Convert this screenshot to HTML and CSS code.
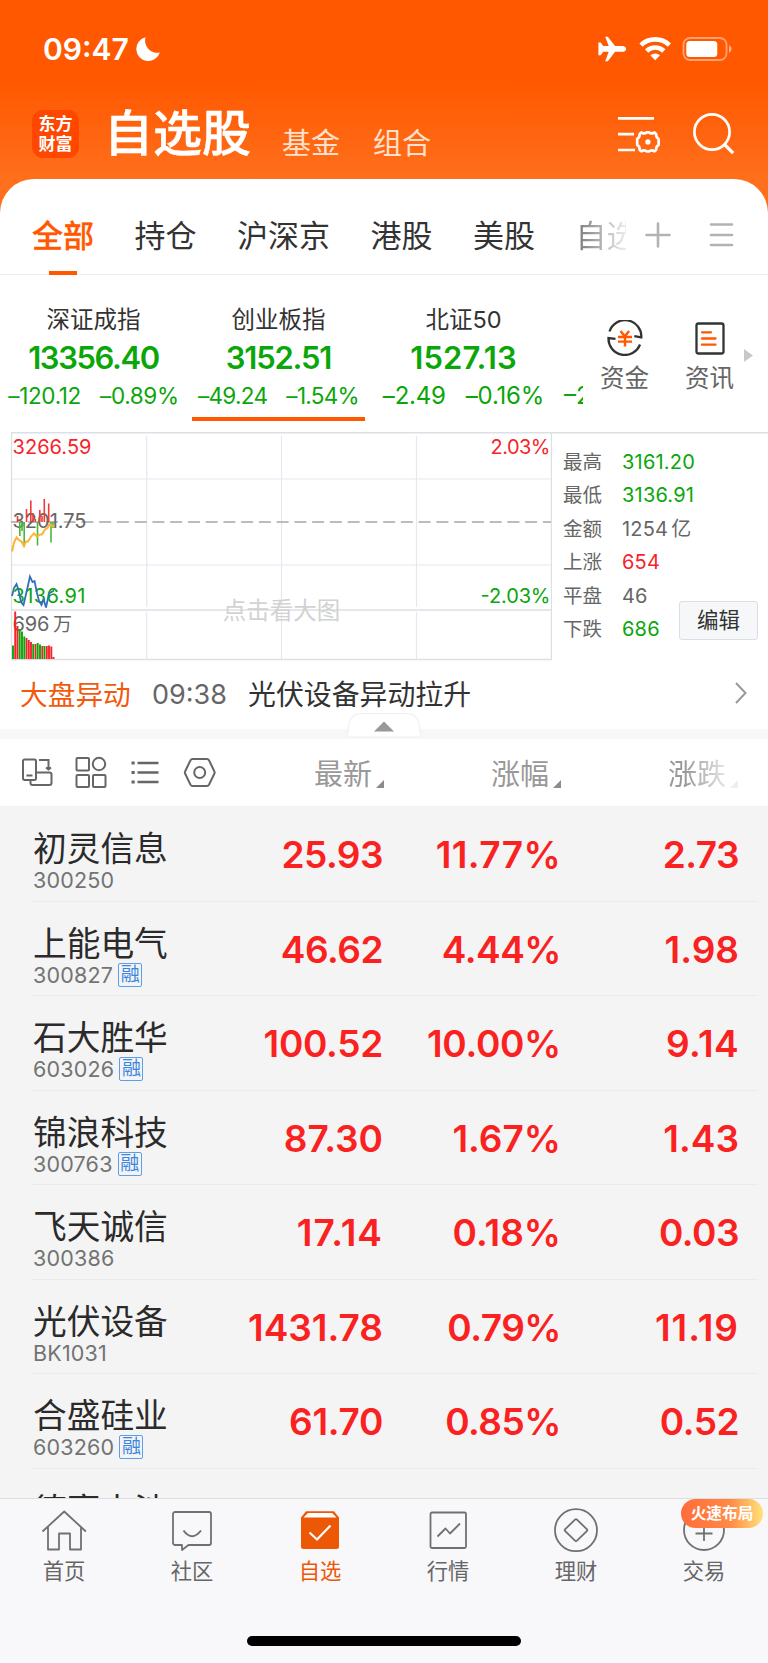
FILE: index.html
```html
<!DOCTYPE html>
<html lang="zh-CN">
<head>
<meta charset="utf-8">
<title>自选股</title>
<link rel="stylesheet" href="styles.css">
</head>
<body>
<div class="app">
  <header class="hero">
    <div class="status">
      <span class="clock">09:47</span>
      <svg class="moon" width="24" height="24" viewBox="0 0 24 24"><path d="M9.6.3A12 12 0 1 0 23.8 15.4 12 12 0 0 1 9.6.3Z" fill="#fff"/></svg>
      <svg class="sys" width="136" height="26" viewBox="0 0 136 26" fill="#fff">
        <path d="M7.2.8h2.6l7.3 9.2h7.2c2.2 0 3.9 1.4 3.9 2.9s-1.7 2.9-3.9 2.9h-7.2l-7.3 9.4H7.2l3.5-9.4H5.2l-2.5 3.500H.4V6.500h2.300l2.500 3.500h5.500z"/>
        <g fill="none" stroke="#fff" stroke-width="4.600"><path d="M43 9.100a20.500 20.500 0 0 1 28.400 0"/><path d="M48.600 15a12.500 12.500 0 0 1 17.200 0"/></g>
        <path d="M52.300 19.300a7.200 7.200 0 0 1 9.800 0L57.200 24.200z"/>
        <rect x="85.500" y="2" width="43" height="22" rx="6.500" fill="none" stroke="#fff" stroke-opacity=".45" stroke-width="1.800"/>
        <rect x="88.300" y="5" width="31" height="16" rx="3.500"/>
        <path d="M131 9.200c1.700.6 2.600 2 2.600 3.800s-.9 3.200-2.600 3.800z" fill-opacity=".5"/>
      </svg>
    </div>
    <div class="title-row">
      <div class="logo"><span>东方</span><span>财富</span></div>
      <h1>自选股</h1>
      <a class="alt alt-1">基金</a>
      <a class="alt alt-2">组合</a>
      <svg class="hero-icons" width="118" height="44" viewBox="0 0 118 44" fill="none" stroke="#fff" stroke-width="2.700">
        <path d="M0 6.300h36M0 22.200h16M0 38h17"/>
        <path d="M23.300 20.500q3.300 2 5.600-.2h2q2.300 2.200 5.600.2l1.600 1.400q-.1 3.800 2.500 5v6q-2.600 1.200-2.500 5l-1.600 1.400q-3.300-2-5.600.2h-2q-2.300-2.200-5.600-.2l-1.600-1.400q.1-3.800-2.500-5v-6q2.600-1.200 2.500-5z" stroke-linejoin="round"/>
        <circle cx="29.900" cy="29.900" r="2.600" fill="#fff" stroke="none"/>
        <circle cx="94" cy="20" r="17.600"/><path d="m106.500 32.500 8.700 8.700" stroke-width="3.200"/>
      </svg>
    </div>
  </header>

  <main class="sheet">
    <nav class="tabs">
      <a class="tab on">全部</a><a class="tab">持仓</a><a class="tab">沪深京</a><a class="tab">港股</a><a class="tab">美股</a><a class="tab cut">自选</a>
      <svg class="tab-tools" width="90" height="30" viewBox="0 0 90 30" stroke="#b2b2b2" stroke-width="2.600" stroke-linecap="round"><path d="M2.500 15h23M14 3.500v23M67 4.500h21M67 15h21M67 25h21"/></svg>
    </nav>

    <section class="indices">
      <div class="index-strip">
        <div class="index first"><span class="iname">深证成指</span><b>13356.40</b><p><span>–120.12</span><span>–0.89%</span></p></div>
        <div class="index active"><span class="iname">创业板指</span><b>3152.51</b><p><span>–49.24</span><span>–1.54%</span></p></div>
        <div class="index third"><span class="iname">北证50</span><b>1527.13</b><p><span>–2.49</span><span>–0.16%</span></p></div>
        <div class="index peek"><p><span>–28.16</span></p></div>
      </div>
      <a class="quick"><svg width="36" height="36" viewBox="0 0 36 36" fill="none" stroke="#333" stroke-width="2.300"><path d="M2.500 11.500A16.300 16.300 0 0 1 34.300 17.500l-7-1.300M33 24.500A16.300 16.300 0 0 1 1.500 18l7 .8"/><path d="m13.500 11 4.300 5.300 4.300-5.300M11 17h14M11 21.600h14M18 16.500v10" stroke="#ff5800" stroke-width="2.400"/></svg>资金</a>
      <a class="quick news-link"><svg width="36" height="36" viewBox="0 0 36 36" fill="none" stroke="#333" stroke-width="2.300"><rect x="4.500" y="3.500" width="27" height="30" rx="2"/><path d="M10 12.300h9M10 18.500h13.500M10 24.700h13.500" stroke="#ff5800" stroke-linecap="round"/></svg>资讯</a>
      <svg class="more" width="9" height="13"><path d="M0 0v13l9-6.500z" fill="#c8c8c8"/></svg>
    </section>

    <section class="market">
      <svg class="chart" width="552" height="230" viewBox="0 432 552 230">
        <g fill="none" stroke="#e6e8f0" stroke-width="1.200"><path d="M12 479h539M12 565h539M146.700 436v171M146.700 612v47M281.500 436v171M281.500 612v47M416.500 436v171M416.500 612v47"/></g>
        <path d="M11.500 433v226.500H551.500V433M12 610h539" fill="none" stroke="#dcdfe5" stroke-width="1.300"/>
        <path d="M11 522h540" stroke="#a6a6a6" stroke-width="1.500" stroke-dasharray="12 5.750" stroke-dashoffset=".6"/>
        <text x="281.500" y="618.500" text-anchor="middle" class="hint">点击看大图</text>
        <g class="axis">
          <text x="12.500" y="453.500" fill="#f8232a" textLength="79">3266.59</text>
          <text x="12.500" y="528" fill="#666" textLength="74">3201.75</text>
          <text x="12.500" y="602.500" fill="#0aa60a" textLength="73">3136.91</text>
          <text x="12.500" y="630.500" fill="#666" textLength="37">696</text><text x="53" y="631" fill="#666" class="cjk">万</text>
          <text x="550.500" y="453.500" text-anchor="end" fill="#f8232a" textLength="60">2.03%</text>
          <text x="550.500" y="602.500" text-anchor="end" fill="#0aa60a" textLength="70">-2.03%</text>
        </g>
        <g stroke-width="1.600" fill="none">
          <path stroke="#f03a35" d="M17.500 522v-6M26.500 522v-13M30.800 522v-21.500M33 522v-9M35.300 522v-3M39.800 522v-12M42 522v-6M44.300 522v-23M48.700 522v-18.500"/>
          <path stroke="#4cb63c" d="M19.800 522v14M22 522v9M24.200 522v25M37.500 522v23.500M51 522v20.500M53 522v6"/>
          <path stroke="#fcb52c" stroke-width="2" d="M12 551.500l2-9 2.500-5 3 3 2 1 2.500 4.500 2-4.500 2 0 3-5 3-3 3 3 3-2 2 0 3-5 3-2 1-3 5 2"/>
          <path stroke="#2f6fbd" stroke-width="1.800" d="M12 596l2-8 2.500-4 2 6 2.500 12 2.500 3 3-13 3.500-15.500 2.500 5.500 2-1 2.500 12 2 8 2.500 4 2-6 2.500 8.500 3-14 5-3"/>
        </g>
        <g stroke-width="1.900">
          <path stroke="#f8232a" d="M15.200 659v-47.500M17.500 659v-33M26.500 659v-21M28.800 659v-19M31 659v-17M35.500 659v-15M42.300 659v-13M46.800 659v-13M49 659v-13.500M51.300 659v-12.500M53.500 659v-2"/>
          <path stroke="#0aa60a" d="M13 659v-13.500M19.700 659v-30M22 659v-27.500M24.300 659v-22.500M33.200 659v-15M37.700 659v-16M40 659v-14.500M44.500 659v-13"/>
        </g>
      </svg>
      <dl class="stats">
        <dt>最高</dt><dd class="down">3161.20</dd>
        <dt>最低</dt><dd class="down">3136.91</dd>
        <dt>金额</dt><dd>1254<span class="unit">亿</span></dd>
        <dt>上涨</dt><dd class="up">654</dd>
        <dt>平盘</dt><dd>46</dd>
        <dt>下跌</dt><dd class="down">686</dd>
      </dl>
      <button class="edit">编辑</button>
    </section>

    <section class="news">
      <span class="news-tag">大盘异动</span><time>09:38</time><span class="news-text">光伏设备异动拉升</span>
      <svg class="chev" width="14" height="24" viewBox="0 0 14 24" fill="none" stroke="#999" stroke-width="2"><path d="m2 2 9.500 10L2 22"/></svg>
    </section>
    <div class="band">
      <svg class="handle" width="78" height="28" viewBox="0 0 78 28"><path d="M2 26 4 13Q6 2.500 16 2.500h46q10 0 12 10.500l2 13z" fill="#fff" stroke="#eeeff2" stroke-width="1.200"/><path d="m39 10.500 10 10H29z" fill="#999"/></svg>
    </div>

    <section class="thead">
      <svg class="tools" width="200" height="36" viewBox="0 0 200 36" fill="none" stroke="#666" stroke-width="2">
        <path d="M4.500 4.500h10a1.500 1.500 0 0 1 1.500 1.500v17.500a1.500 1.500 0 0 1-1.500 1.500h-10A1.500 1.500 0 0 1 3 23.500V6a1.500 1.500 0 0 1 1.500-1.500zM6.500 20.500h6M19 5h9.500V13M10.500 25v3a2 2 0 0 0 2 2h17a2 2 0 0 0 2-2V19.500a2 2 0 0 0-2-2H16M26 12.500l2.500 2 2.500-2"/>
        <rect x="56.500" y="3" width="12.500" height="12.500" rx="1"/><circle cx="79" cy="9" r="6.200"/><rect x="56.500" y="20" width="12.500" height="12" rx="1"/><rect x="73" y="20" width="12.500" height="12" rx="1"/>
        <path d="M117.500 8h21M117.500 17.500h21M117.500 27h21" stroke-width="2.600"/><path d="M111.500 8h3.200M111.500 17.500h3.200M111.500 27h3.200" stroke-width="3"/>
        <path d="M172.500 4h14.500q1.300 0 2 1.200l5.300 11q.7 1.300 0 2.600l-5.300 11q-.7 1.200-2 1.200h-14.500q-1.300 0-2-1.200l-5.300-11q-.7-1.300 0-2.600l5.300-11q.7-1.200 2-1.200z"/><circle cx="179.700" cy="17.500" r="5.500"/>
      </svg>
      <span class="col c1">最新<i></i></span><span class="col c2">涨幅<i></i></span><span class="col c3">涨跌<i></i></span>
    </section>

    <section class="list">
      <div class="row"><div class="stock"><strong>初灵信息</strong><small>300250</small></div><b>25.93</b><b class="loose">11.77%</b><b>2.73</b></div>
      <div class="row"><div class="stock"><strong>上能电气</strong><small>300827<em>融</em></small></div><b>46.62</b><b>4.44%</b><b class="even">1.98</b></div>
      <div class="row"><div class="stock"><strong>石大胜华</strong><small>603026<em>融</em></small></div><b class="snug">100.52</b><b class="snug">10.00%</b><b class="loose">9.14</b></div>
      <div class="row"><div class="stock"><strong>锦浪科技</strong><small>300763<em>融</em></small></div><b class="even">87.30</b><b class="even">1.67%</b><b class="even">1.43</b></div>
      <div class="row"><div class="stock"><strong>飞天诚信</strong><small>300386</small></div><b class="wide">17.14</b><b class="even">0.18%</b><b>0.03</b></div>
      <div class="row"><div class="stock"><strong>光伏设备</strong><small>BK1031</small></div><b class="even">1431.78</b><b>0.79%</b><b class="wide">11.19</b></div>
      <div class="row"><div class="stock"><strong>合盛硅业</strong><small>603260<em>融</em></small></div><b class="snug">61.70</b><b>0.85%</b><b>0.52</b></div>
      <div class="row"><div class="stock"><strong>德赛电池</strong></div></div>
    </section>
  </main>

  <footer class="bottom">
    <nav class="bar">
      <a><svg width="48" height="46" viewBox="0 0 48 46"><path d="m2.500 23.500 21.700-20 21.700 20M8 19v22.500h11V25.500h11v16h11V19"/></svg>首页</a>
      <a><svg width="48" height="46" viewBox="0 0 48 46"><path d="M7 4h34a2 2 0 0 1 2 2v29a2 2 0 0 1-2 2H20.500L14 42v-5H7a2 2 0 0 1-2-2V6a2 2 0 0 1 2-2z"/><path d="M15.500 22.500q8.500 11.500 17.500 0" stroke-width="2"/></svg>社区</a>
      <a class="on"><svg width="48" height="46" viewBox="0 0 48 46"><path d="M5 9.500 10 3.200h28l5 6.300v29a2.500 2.500 0 0 1-2.500 2.500h-33A2.500 2.500 0 0 1 5 38.500z" fill="#ec5805" stroke="none"/><path d="m12 5-4.500 4.500h33L36.200 5z" fill="#fff" stroke="none"/><path d="m13.500 24.500 7.500 7 13.500-14" stroke="#fff" stroke-width="2.200"/></svg>自选</a>
      <a><svg width="48" height="46" viewBox="0 0 48 46"><rect x="6.500" y="4.500" width="35.500" height="35.500" rx="1.500"/><path d="m13.500 28.500 8-8 4.500 5 10-10"/></svg>行情</a>
      <a><svg width="48" height="46" viewBox="0 0 48 46"><circle cx="24" cy="22.200" r="21"/><path d="M23 11.700q1-1 2 0l9.800 9.500q1 1 0 2L25 32.700q-1 1-2 0l-9.800-9.500q-1-1 0-2z"/></svg>理财</a>
      <a class="trade"><svg width="48" height="46" viewBox="0 0 48 46"><circle cx="24" cy="22" r="20"/><path d="M15.500 25.500h17M24 16v17"/></svg>交易<span class="promo">火速布局</span></a>
    </nav>
    <div class="home-indicator"></div>
  </footer>
</div>
</body>
</html>
```
FILE: styles.css
```css
* { box-sizing: border-box; }
body {
  margin: 0;
  background: #fff;
  color: #333;
  font-family: Inter, "Noto Sans CJK SC", sans-serif;
  -webkit-font-smoothing: antialiased;
}
h1, p, dl, dd { margin: 0; }
svg { display: block; flex: none; }
.app {
  width: 768px;
  height: 1663px;
  overflow: hidden;
  display: flex;
  flex-direction: column;
}

/* Header */
.hero {
  height: 224px;
  flex: none;
  margin-bottom: -45px;
  color: #fff;
  background: linear-gradient(#ff5800 0, #ff5800 80px, #ff6f1c 179px);
}
.status {
  height: 98px;
  padding: 0 34px 0 43px;
  display: flex;
  align-items: center;
}
.clock { font-size: 30px; font-weight: 600; width: 93px; }
.sys { margin-left: auto; }
.title-row { height: 81px; display: flex; padding-left: 32px; }
.logo {
  width: 47px; height: 48px; margin-top: 12px;
  border-radius: 11px;
  background: #ff4700;
  font-size: 17px; font-weight: 700; line-height: 20px;
  display: flex; flex-direction: column; align-items: center; justify-content: center;
}
h1 { font-size: 49px; font-weight: 500; line-height: 72px; margin-left: 25px; width: 150px; white-space: nowrap; -webkit-text-stroke: .5px #fff; }
.alt { font-size: 29px; line-height: 44px; margin-top: 24px; color: #ffe0cc; width: 91px; }
.alt-1 { margin-left: 28px; }
.hero-icons { margin: 14px 32px 0 auto; }

/* Sheet */
.sheet {
  height: 1319px;
  flex: none;
  overflow: hidden;
  border-radius: 34px 34px 0 0;
  background: #fff;
}
.tabs {
  height: 96px;
  border-bottom: 1px solid #ececec;
  display: flex;
  gap: 40.500px;
  padding: 0 33px 0 32px;
  font-size: 31px;
}
.tab { line-height: 46px; padding-top: 34px; height: 96px; white-space: nowrap; flex: none; }
.tab.on {
  color: #ff5800; font-weight: 500;
  -webkit-text-stroke: .3px #ff5800;
  background: linear-gradient(#ff5800, #ff5800) 17px 100% / 28px 4px no-repeat;
}
.tab.cut {
  width: 50px; overflow: hidden;
  color: transparent;
  background: linear-gradient(90deg, #777, #eee) 0 0 / 100% 100%;
  -webkit-background-clip: text;
  background-clip: text;
}
.tab-tools { margin: 41px 0 0 -22.500px; }

.indices { height: 157px; display: flex; }
.index-strip { width: 583px; flex: none; overflow: hidden; display: flex; gap: 12px; padding-left: 7px; }
.index {
  width: 173px; height: 146px; flex: none;
  display: flex; flex-direction: column; align-items: center;
  color: #0aa60a;
  padding-top: 27px;
  white-space: nowrap;
}
.index.active { border-bottom: 4px solid #ff5800; }
.iname { color: #333; font-size: 23.500px; line-height: 36px; }
.index b { font-size: 31px; font-weight: 600; line-height: 40px; letter-spacing: -1.200px; }
.index p { display: flex; gap: 19px; font-size: 22.500px; line-height: 36px; letter-spacing: -.7px; }
.index.first b { letter-spacing: -1.400px; }
.index.first p { letter-spacing: -.35px; }
.index.third b { letter-spacing: .1px; }
.index.third p { font-size: 24px; letter-spacing: -.2px; gap: 20px; }
.index.peek { align-items: flex-start; padding: 103px 0 0 2px; }
.index.peek p { font-size: 24px; letter-spacing: 0; }
.quick {
  display: flex; flex-direction: column; align-items: center;
  width: 49px; flex: none; margin: 45px 0 0 17px;
  font-size: 24.500px; line-height: 46px; color: #666; white-space: nowrap;
}
.quick svg { margin-bottom: -1px; }
.news-link { margin-left: 36px; }
.more { margin: 74px 0 0 10px; }

/* Chart and stats */
.market {
  height: 230px;
  display: flex;
  background: linear-gradient(#dcdfe5, #dcdfe5) 11px 0 / 757px 1.500px no-repeat;
}
.hint { font: 23.500px "Noto Sans CJK SC", sans-serif; fill: #d2d2d2; }
.axis { font: 20px Inter, sans-serif; }
.axis .cjk { font: 19px "Noto Sans CJK SC", sans-serif; }
.stats {
  width: 127px; margin: 13.500px 0 0 11px; height: 201px; flex: none;
  display: grid; grid-template-columns: 59px 68px; grid-template-rows: repeat(6, 33.500px);
  font-size: 19.500px; line-height: 33px; color: #666; white-space: nowrap;
}
.stats dd { font-size: 20px; letter-spacing: .2px; }
.unit { margin-left: 3px; }
.stats .down { color: #0aa60a; }
.stats .up { color: #f8232a; }
.edit {
  width: 79px; height: 39px; margin: 169px 0 0 -11px; padding: 0 0 4px;
  border: 1px solid #dcdee3; border-radius: 3px; background: #f6f7f9;
  font: 21.500px/33px "Noto Sans CJK SC", sans-serif; color: #333;
}

.news { height: 67px; display: flex; align-items: center; padding: 0 20px 6px; font-size: 28px; }
.news-tag { color: #f2590c; width: 132px; font-size: 27.700px; }
.news time { color: #666; width: 96px; font-size: 27px; margin-top: 3px; }
.news-text { font-size: 27.900px; }
.chev { margin-left: auto; }
.band { height: 10px; background: #f7f8fa; position: relative; }
.handle { position: absolute; left: 345px; top: -18px; }

/* Stock list */
.thead {
  height: 67px; position: relative; display: flex; padding-left: 20px;
  font-size: 29px; line-height: 71px; color: #999;
}
.tools { margin-top: 16px; width: 200px; }
.col { display: flex; width: 177px; justify-content: flex-end; }
.c1 { width: 164px; }
.col i { width: 8px; height: 8px; margin: 41px 0 0 4px; background: #8a8a90; clip-path: polygon(100% 0, 100% 100%, 0 100%); }
.c3 { -webkit-mask-image: linear-gradient(90deg, #000 70%, rgba(0,0,0,.15) 96%); mask-image: linear-gradient(90deg, #000 70%, rgba(0,0,0,.15) 96%); }
.list { background: #f4f4f4; height: 693px; padding-top: 1px; }
.row {
  height: 94.500px; display: flex; padding-left: 33px;
  background: linear-gradient(#ebebeb, #ebebeb) 32px 100% / 726px 1px no-repeat;
}
.stock { width: 170px; flex: none; padding-top: 18px; }
.stock strong { display: block; font-size: 33.700px; font-weight: 400; line-height: 48px; white-space: nowrap; color: #2b2b2b; }
.stock small { display: flex; align-items: center; font-size: 21.500px; line-height: 18px; margin-top: -2px; letter-spacing: .2px; color: #737373; }
.stock em {
  margin-left: 5px; width: 24px; height: 24px; margin-top: -3px; margin-bottom: -3px;
  border: 1.500px solid #5c9ee8; border-radius: 2px;
  font-style: normal; font-size: 19px; line-height: 21px; color: #3b87df; letter-spacing: 0;
  display: flex; justify-content: center;
}
.row b { width: 178px; text-align: right; font-size: 37px; font-weight: 600; line-height: 96px; color: #fa2121; flex: none; letter-spacing: -.5px; }
.row b:nth-of-type(1) { width: 180px; }
.row b.snug { letter-spacing: -.3px; }
.row b.even { letter-spacing: 0; }
.row b.loose { letter-spacing: .4px; }
.row b.wide { letter-spacing: 1px; }

/* Bottom bar */
.bottom { height: 165px; flex: none; background: #f8f8fb; border-top: 1px solid #dedee2; }
.bar { display: flex; height: 137px; }
.bar a {
  width: 128px; display: flex; flex-direction: column; align-items: center; position: relative;
  padding-top: 9px; font-size: 21.300px; line-height: 34px; color: #666;
}
.bar svg { fill: none; stroke: #707070; stroke-width: 1.800; stroke-linejoin: round; }
.bar .on { color: #ec5805; }
.promo {
  position: absolute; left: 41px; top: 0; width: 82px; height: 29px;
  border-radius: 15px; background: linear-gradient(90deg, #ff6c3b 0, #ff8a45 60%, #ffe27c 100%);
  color: #fff; font-size: 15.700px; font-weight: 700; line-height: 29px; text-align: center; white-space: nowrap;
}
.home-indicator { width: 274px; height: 10px; border-radius: 5px; background: #000; margin: 0 auto; }
```
